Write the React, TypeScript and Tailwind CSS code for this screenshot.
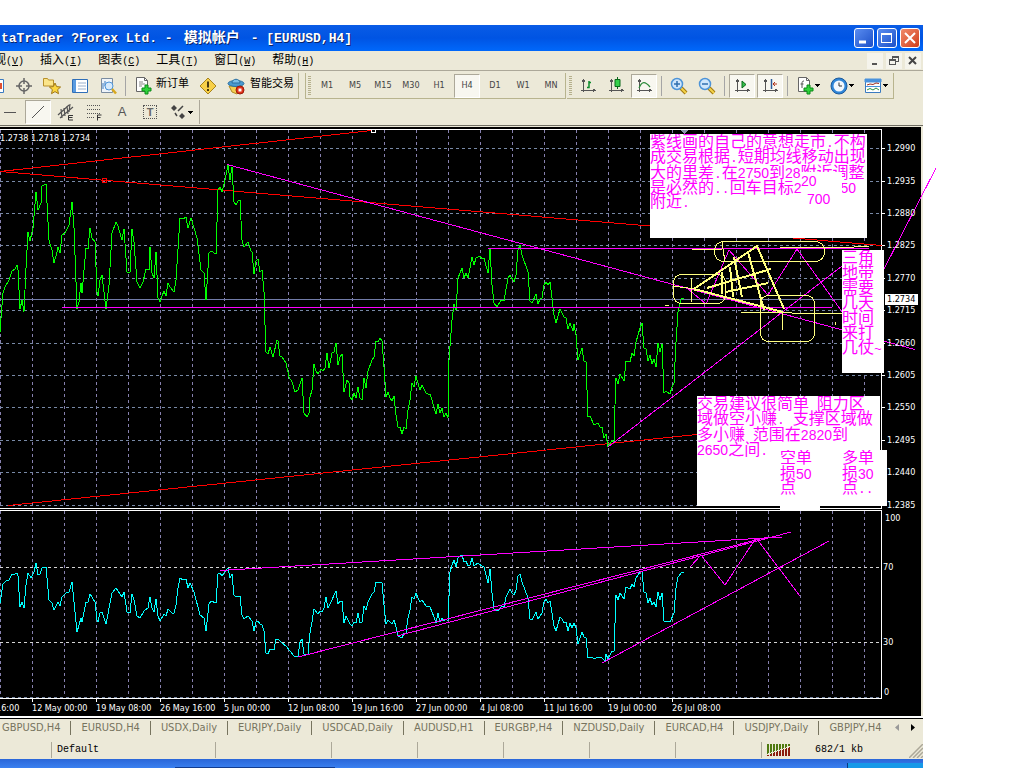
import type { ReactNode } from 'react';
import clsx from 'clsx';

const PRICE =
  '0,332 2,305 3,293 5,287 9,280 12,271 15,269 17,265 18,270 20,309 22,300 24,312 26,268 28,232 30,241 33,228 36,192 38,210 41,203 42,186 46,184 49,240 51,247 52,250 54,263 57,252 58,247 60,253 62,235 65,233 69,225 72,202 74,228 77,309 79,302 81,283 82,293 86,248 88,249 90,228 92,238 95,242 97,292 98,296 100,280 102,275 104,292 106,309 109,285 112,233 116,222 118,226 122,240 124,229 127,272 130,272 132,229 134,242 137,282 140,288 143,282 146,269 149,270 150,247 152,273 154,278 156,252 158,298 160,302 162,296 164,291 166,296 168,283 170,287 174,292 176,280 180,218 183,219 186,217 188,228 191,218 197,238 201,270 204,273 206,300 209,253 211,251 216,254 218,190 220,187 222,192 225,180 228,165 230,180 232,167 234,202 236,205 238,201 240,200 242,240 244,247 248,242 251,251 252,252 254,274 256,261 258,259 260,272 262,270 264,292 265,325 266,352 268,354 270,347 273,357 277,340 278,341 280,356 282,357 286,363 289,377 292,382 295,392 298,390 302,378 304,413 307,417 309,413 310,397 312,390 314,364 316,371 318,374 321,369 323,371 325,368 327,353 329,368 332,353 334,352 336,343 338,365 340,357 342,354 344,392 347,380 349,383 350,397 352,400 354,393 356,398 358,387 360,398 362,400 364,378 366,388 368,371 372,360 374,357 376,341 378,342 380,338 382,341 384,367 386,397 388,392 390,398 392,401 394,396 396,415 398,427 400,427 402,434 404,427 406,429 408,410 410,400 412,383 414,387 416,376 420,390 422,385 426,393 428,394 430,394 432,400 436,414 438,404 440,413 442,408 444,417 446,413 448,418 449,360 451,333 452,320 454,304 456,310 458,278 462,268 464,278 466,273 468,278 470,268 472,257 474,265 476,258 480,256 482,259 484,258 488,273 490,248 492,285 494,303 497,307 501,300 504,301 508,278 510,275 514,282 516,275 518,250 520,245 522,255 528,272 530,301 532,303 536,294 538,304 540,299 542,298 544,285 546,282 548,285 550,282 552,298 554,315 556,323 560,309 564,317 566,318 568,329 570,323 573,331 574,324 576,335 578,360 582,348 584,361 586,362 588,417 590,416 594,425 598,423 600,427 602,427 604,438 606,434 608,447 612,440 614,443 615,405 616,378 618,384 620,374 624,381 626,361 630,362 632,353 634,356 636,342 640,328 642,323 644,348 646,349 648,361 650,355 652,364 654,359 656,367 658,343 660,352 662,344 664,393 666,391 670,394 672,387 674,383 676,342 678,312 681,300 682,298 684,298';

const RSI =
  '0,603 3,584 6,581 9,580 12,574 15,574 17,573 18,576 20,607 22,602 24,608 26,585 28,573 31,578 34,572 36,563 38,575 40,574 42,568 46,567 49,600 52,603 54,610 58,602 60,606 62,597 66,593 69,592 72,582 74,602 77,632 81,618 82,622 86,602 88,602 90,594 95,602 97,620 98,622 100,613 102,612 106,624 112,593 116,588 122,597 124,592 127,612 130,613 132,594 134,600 137,616 140,618 144,611 148,608 150,597 152,608 154,612 156,599 158,616 160,621 164,614 166,616 168,609 172,613 174,613 176,605 178,588 180,578 183,580 186,579 188,588 190,583 194,592 200,615 204,618 206,631 209,604 211,601 216,603 218,574 220,573 222,576 228,568 230,578 232,574 234,595 236,597 238,596 240,596 242,615 244,619 248,616 252,621 254,631 256,622 258,621 260,624 262,625 264,631 266,653 268,654 270,649 274,650 276,639 278,639 282,643 286,646 290,651 294,656 298,656 300,642 302,639 304,654 308,654 310,633 312,622 314,609 318,614 320,611 322,612 324,608 326,597 328,608 330,604 336,591 338,604 340,601 342,601 344,623 346,616 350,624 352,626 354,622 356,623 358,613 360,623 362,622 364,606 366,610 368,602 372,594 374,592 376,582 380,582 382,583 384,605 386,624 388,620 392,624 394,620 396,627 398,636 402,638 404,633 406,633 408,618 410,610 412,597 414,599 416,593 418,598 420,602 422,600 426,606 430,607 434,617 436,623 438,613 440,622 442,618 444,621 446,619 448,621 450,572 452,565 454,560 456,567 458,558 462,555 464,562 466,561 468,566 470,565 472,558 474,566 478,563 482,566 484,567 488,583 490,569 492,593 494,609 498,611 502,606 504,607 506,597 510,589 512,593 514,595 516,590 518,576 520,574 522,582 528,598 530,619 532,620 536,612 538,619 542,613 544,602 546,599 548,603 550,601 552,613 554,626 556,631 560,617 562,619 564,623 566,622 568,631 570,623 572,628 574,623 576,628 578,644 582,632 584,637 586,638 588,658 592,657 594,659 598,657 602,658 605,661 606,654 608,659 612,651 614,652 616,595 618,600 620,593 624,599 626,587 630,589 632,584 634,587 636,578 640,572 642,571 644,592 646,593 648,603 650,598 652,605 654,602 656,607 658,592 660,600 662,593 664,621 668,621 670,622 674,613 676,588 678,577 682,572 684,572';

const GRID_X = Array.from({ length: 28 }, (_, i) => i * 32);

const LEVELS = [
  { y: 148, label: '1.2990' },
  { y: 181, label: '1.2935' },
  { y: 213, label: '1.2880' },
  { y: 245, label: '1.2825' },
  { y: 278, label: '1.2770' },
  { y: 310, label: '1.2715' },
  { y: 343, label: '1.2660' },
  { y: 375, label: '1.2605' },
  { y: 407, label: '1.2550' },
  { y: 440, label: '1.2495' },
  { y: 472, label: '1.2440' },
  { y: 505, label: '1.2385' },
];

const RSI_LEVELS = [
  { x: 885, y: 518, label: '100' },
  { x: 883, y: 567, label: '70' },
  { x: 883, y: 642, label: '30' },
  { x: 884, y: 692, label: '0' },
];

const TIMES = [
  '16:00',
  '12 May 00:00',
  '19 May 08:00',
  '26 May 16:00',
  '5 Jun 00:00',
  '12 Jun 08:00',
  '19 Jun 16:00',
  '27 Jun 00:00',
  '4 Jul 08:00',
  '11 Jul 16:00',
  '19 Jul 00:00',
  '26 Jul 08:00',
];

const MENU = [
  ['视', 'V'],
  ['插入', 'I'],
  ['图表', 'C'],
  ['工具', 'T'],
  ['窗口', 'W'],
  ['帮助', 'H'],
];

const PERIODS = ['M1', 'M5', 'M15', 'M30', 'H1', 'H4', 'D1', 'W1', 'MN'];

const TABS = [
  'GBPUSD,H4',
  'EURUSD,H4',
  'USDX,Daily',
  'EURJPY,Daily',
  'USDCAD,Daily',
  'AUDUSD,H1',
  'EURGBP,H4',
  'NZDUSD,Daily',
  'EURCAD,H4',
  'USDJPY,Daily',
  'GBPJPY,H4',
];

const TAHOMA = "font-['DejaVu_Sans_Condensed','DejaVu_Sans',sans-serif]";
const SONG = "font-['Liberation_Mono','Noto_Sans_CJK_SC',monospace]";

// Digits and punctuation take half of a full-width cell.
function Mixed({ text }: { text: string }) {
  return (
    <>
      {text.split(/([0-9]+|[ .~]+)/).map((part, i) => {
        if (i % 2 === 0) return part;
        return (
          <span key={i} className={/\d/.test(part) ? "font-['Liberation_Sans',sans-serif] text-[14px]" : 'text-[13px]'}>
            {part}
          </span>
        );
      })}
    </>
  );
}

function Icon({ children, size = 18 }: { children: ReactNode; size?: number }) {
  return (
    <svg width={size} height={size} viewBox="0 0 18 18" fill="none" className="shrink-0">
      {children}
    </svg>
  );
}

function ToolButton({
  label,
  pressed,
  wide,
  children,
}: {
  label: string;
  pressed?: boolean;
  wide?: boolean;
  children: ReactNode;
}) {
  return (
    <button
      aria-label={label}
      aria-pressed={pressed}
      className={clsx('flex h-6 shrink-0 items-center justify-center', wide ? 'w-[34px]' : 'w-7')}
    >
      <span
        className={clsx(
          'flex h-6 items-center justify-center',
          pressed && 'w-[26px] border border-[#aca899] border-r-white border-b-white bg-[#f8f7f0]',
        )}
      >
        {children}
      </span>
    </button>
  );
}

function Separator() {
  return <div className="mx-[3px] h-5 w-px shrink-0 bg-[#a5a5a5]" />;
}

function Grip() {
  return <div className="mx-[2px] h-5 w-[3px] shrink-0 bg-[repeating-linear-gradient(#b5b08c_0_1px,#ece9d8_1px_2px)]" />;
}

function Caret() {
  return (
    <svg width="5" height="3" viewBox="0 0 5 3" className="ml-px shrink-0" shapeRendering="crispEdges">
      <path d="M0 0h5L2.5 3z" fill="#000" />
    </svg>
  );
}

function Axes() {
  return (
    <path
      d="M4.500 2v13M2 13.500h14M3 4.500l1.500-2 1.500 2M14 12l2 1.500-2 1.500"
      stroke="#555"
      shapeRendering="crispEdges"
    />
  );
}

function Page() {
  return (
    <>
      <path d="M2.500.5h8l3 3v11h-11z" fill="#fff" stroke="#666" />
      <path d="M10.500.5v3h3" stroke="#666" />
    </>
  );
}

function Plus() {
  return <path d="M11 8h3v3h3v3h-3v3h-3v-3H8v-3h3z" fill="#2fd23a" stroke="#0a8a18" />;
}

function Magnifier({ plus }: { plus?: boolean }) {
  return (
    <Icon>
      <path d="M11 11l5 5" stroke="#a37a10" strokeWidth="4" />
      <path d="M11 11l5 5" stroke="#f4d24a" strokeWidth="2" />
      <circle cx="7" cy="7" r="5.500" fill="#cfe6fb" stroke="#4d94d8" strokeWidth="1.500" />
      <path d={plus ? 'M4 7h6M7 4v6' : 'M4 7h6'} stroke="#2f6fb0" strokeWidth="1.500" />
    </Icon>
  );
}

function TitleBar() {
  return (
    <header className="flex h-[26px] items-center justify-between bg-linear-to-b from-[#0a5ce6] via-[#0054e3] to-[#0068fb] pr-[3px]">
      <h1
        className={clsx(
          SONG,
          'overflow-hidden pl-px text-[13px] font-bold whitespace-nowrap text-white [text-shadow:1px_1px_0_#0a246a]',
        )}
      >
        taTrader ?Forex Ltd. -<span className="mx-[11px] text-[14px]">模拟帐户</span>- [EURUSD,H4]
      </h1>
      <div className="flex shrink-0 gap-[3px]">
        <button aria-label="Minimize" className="size-5 rounded-[3px] border border-white bg-linear-to-br from-[#5a8cf0] to-[#1c4fc8]">
          <svg viewBox="0 0 18 18"><path d="M4 13h7" stroke="#fff" strokeWidth="3" /></svg>
        </button>
        <button aria-label="Maximize" className="size-5 rounded-[3px] border border-white bg-linear-to-br from-[#5a8cf0] to-[#1c4fc8]">
          <svg viewBox="0 0 18 18" fill="none" shapeRendering="crispEdges"><path d="M3.500 4.500h10v9h-10zM3 5.500h11" stroke="#fff" /><path d="M3 4h11v2H3z" fill="#fff" /></svg>
        </button>
        <button aria-label="Close" className="size-5 rounded-[3px] border border-white bg-linear-to-br from-[#f08a6a] to-[#d03a14]">
          <svg viewBox="0 0 18 18"><path d="M4 4l10 10M14 4L4 14" stroke="#fff" strokeWidth="2" /></svg>
        </button>
      </div>
    </header>
  );
}

function MenuBar() {
  return (
    <nav className="flex h-5 items-center justify-between border-b border-[#aca899] pr-[2px]">
      <div className={clsx(SONG, '-ml-[6px] flex gap-4 text-[12px] whitespace-nowrap')}>
        {MENU.map(([name, key]) => (
          <button key={key} className="flex items-baseline">
            {name}
            <span className="text-[10px]">
              (<u>{key}</u>)
            </span>
          </button>
        ))}
      </div>
      <div className="flex gap-[3px]">
        <button aria-label="Minimize chart" className="size-4 bg-[#f5f4ec]">
          <svg viewBox="0 0 16 16"><path d="M5 11h5" stroke="#555" strokeWidth="2" /></svg>
        </button>
        <button aria-label="Restore chart" className="size-4 bg-[#f5f4ec]">
          <svg viewBox="0 0 16 16" fill="none" shapeRendering="crispEdges"><path d="M3.500 7.500h6v4h-6zM3 6.500h7M6.500 6V4.500h6v4H10M6 3.500h7" stroke="#555" /></svg>
        </button>
        <button aria-label="Close chart" className="size-4 bg-[#f5f4ec]">
          <svg viewBox="0 0 16 16"><path d="M4 4l7 7M11 4l-7 7" stroke="#444" strokeWidth="2" /></svg>
        </button>
      </div>
    </nav>
  );
}

function Toolbar() {
  return (
    <div className="flex h-7 gap-[6px] pt-[2px] whitespace-nowrap">
      <div className="-ml-[18px] flex shrink-0 items-center border-r border-b border-[#b8b48e] pr-[4px]">
        <ToolButton label="Market watch">
          <Icon>
            <path d="M1 2.500h15.500v13H1z" fill="#fff" stroke="#3a7ac0" />
            <path d="M14 6v6" stroke="#e05030" strokeWidth="2" />
          </Icon>
        </ToolButton>
        <ToolButton label="Data window">
          <Icon>
            <circle cx="9" cy="9" r="5" stroke="#666" strokeWidth="1.500" />
            <path d="M9 1v6M9 11v6M1 9h6M11 9h6" stroke="#666" strokeWidth="1.500" />
          </Icon>
        </ToolButton>
        <ToolButton label="Favorites">
          <Icon>
            <path d="M.5 1.500h4l1 1.500h5v6H.5z" fill="#fbe58a" stroke="#b8902a" />
            <path d="M12 6l1.600 3.600 4 .4-3 2.700.9 4-3.500-2.100-3.500 2.100.9-4-3-2.700 4-.4z" fill="#fbd640" stroke="#a07818" />
          </Icon>
        </ToolButton>
        <ToolButton label="Navigator">
          <Icon>
            <path d="M1.500 2.500h15v13h-15z" fill="#fff" stroke="#2f6fb8" />
            <path d="M2 3h3v12H2z" fill="#5a9be0" />
            <path d="M7 6h8M7 9h8M7 12h8" stroke="#9ab0cc" />
          </Icon>
        </ToolButton>
        <ToolButton label="Strategy tester">
          <Icon>
            <path d="M2.500 1.500h11v14h-11z" fill="#eef4fa" stroke="#7a8ca0" />
            <path d="M4 12V6M6 9V4M8 6v7" stroke="#3a7ac0" />
            <circle cx="10" cy="9" r="4" fill="#d6eafc" stroke="#4d94d8" />
            <path d="M13 12l4 4.500" stroke="#d8a820" strokeWidth="2.500" />
          </Icon>
        </ToolButton>
        <Separator />
        <button className={clsx(SONG, 'flex h-6 shrink-0 items-center px-[5px] text-[11px]')}>
          <Icon><Page /><path d="M5 5h4M5 7h6M5 9h3" stroke="#888" /><Plus /></Icon>
          <span className="pb-[2px] pl-1">新订单</span>
        </button>
        <ToolButton label="Alerts">
          <Icon>
            <path d="M9 1l8 8-8 8-8-8z" fill="#f8d048" stroke="#a8841c" />
            <path d="M9 4.500v6M9 12v2" stroke="#4a3a10" strokeWidth="2" />
          </Icon>
        </ToolButton>
        <button className={clsx(SONG, 'flex h-6 shrink-0 items-center pl-[5px] text-[11px]')}>
          <Icon>
            <path d="M2 9l3 6 5 2 5-8z" fill="#f4cf52" stroke="#b08820" />
            <ellipse cx="9" cy="6.500" rx="8" ry="3" fill="#4a9ad0" stroke="#2a6fa0" />
            <path d="M5 6c0-5 8-5 8 0z" fill="#7cc0ea" stroke="#2a6fa0" />
            <circle cx="13" cy="13" r="4" fill="#e03018" stroke="#9a1c0c" />
            <path d="M11.500 11.500h3v3h-3z" fill="#fff" />
          </Icon>
          <span className="pb-[2px] pl-[5px]">智能交易</span>
        </button>
      </div>

      <div className="flex shrink-0 items-center border-r border-b border-l border-[#b8b48e]">
        <Grip />
        {PERIODS.map((p) => (
          <ToolButton key={p} label={p} pressed={p === 'H4'}>
            <span className={clsx(TAHOMA, 'text-[9px] text-[#444]')}>{p}</span>
          </ToolButton>
        ))}
      </div>

      <div className="-ml-[5px] flex shrink-0 items-center border-r border-b border-[#b8b48e]">
        <Grip />
        <ToolButton label="Bar chart">
          <Icon><Axes /><path d="M8 10.500h2V4M10 5.500h2" stroke="#0a8a2a" strokeWidth="1.500" /></Icon>
        </ToolButton>
        <ToolButton label="Candlesticks">
          <Icon><Axes /><path d="M10.500 0v12" stroke="#0a6a1a" /><path d="M8 2.500h5v7H8z" fill="#35d04a" stroke="#0a6a1a" /></Icon>
        </ToolButton>
        <ToolButton label="Line chart" pressed>
          <Icon><Axes /><path d="M4 11c3-7 6-7 11-1" stroke="#2a8a3a" strokeWidth="1.200" /></Icon>
        </ToolButton>
        <Separator />
        <ToolButton label="Zoom in"><Magnifier plus /></ToolButton>
        <ToolButton label="Zoom out"><Magnifier /></ToolButton>
        <Separator />
        <ToolButton label="Auto scroll" pressed>
          <Icon><Axes /><path d="M9 4l4 3.500L9 11z" fill="#35c04a" stroke="#0a6a1a" /></Icon>
        </ToolButton>
        <ToolButton label="Chart shift" pressed>
          <Icon><Axes /><path d="M10.500 2v10" stroke="#2a5a9a" strokeWidth="1.500" /><path d="M16 7h-4M14 5l-2 2 2 2" stroke="#b03018" /></Icon>
        </ToolButton>
        <Separator />
        <ToolButton label="Indicators" wide>
          <Icon><Page /><path d="M8 4c-2 0-2 1-2 3v4M4.500 7h3" stroke="#555" /><Plus /></Icon>
          <Caret />
        </ToolButton>
        <ToolButton label="Periods" wide>
          <Icon>
            <circle cx="9" cy="9" r="8" fill="#2f86d8" stroke="#1c5a9c" />
            <circle cx="9" cy="9" r="5.500" fill="#f2f8fe" />
            <path d="M9 5.500V9h3" stroke="#333" />
          </Icon>
          <Caret />
        </ToolButton>
        <ToolButton label="Templates" wide>
          <Icon>
            <path d="M1.500 2.500h15v13h-15z" fill="#fff" stroke="#3a7ac0" />
            <path d="M1 2h16v3H1zM2 9.500h14" fill="#4a92dc" stroke="#4a92dc" />
            <path d="M3 8l3-1 3 .5 3-1.500 3 .5" stroke="#a03020" />
            <path d="M3 13l3-1.500 3 1.500 3-2 3 2" stroke="#2a9040" />
          </Icon>
          <Caret />
        </ToolButton>
      </div>
    </div>
  );
}

function DrawingBar() {
  return (
    <div className="flex h-[26px] items-center">
      <div className="-ml-[18px] flex items-center border-r border-[#aca899] pr-px pl-[14px]">
        <ToolButton label="Horizontal line">
          <Icon><path d="M3 9.500h12" stroke="#555" /></Icon>
        </ToolButton>
        <ToolButton label="Trend line" pressed>
          <Icon><path d="M3 15L15 3" stroke="#555" /></Icon>
        </ToolButton>
        <ToolButton label="Equidistant channel">
          <Icon>
            <path d="M1 12L12 2M3 15L16 4M4 6l1 9M7 5l1 8M10 3l1 8M13 1l-1 8" stroke="#555" strokeWidth="1.200" />
            <path d="M16 12.500h-4.500v4.500h4.500M11.500 14.500h4" stroke="#333" />
          </Icon>
        </ToolButton>
        <ToolButton label="Fibonacci retracement">
          <Icon>
            <path d="M2 2.500h14M2 6.500h14M2 10.500h14M2 14.500h8" stroke="#555" strokeDasharray="1 1" shapeRendering="crispEdges" />
            <path d="M12.500 17.500v-5.500h4M12.500 14.500h3" stroke="#333" />
          </Icon>
        </ToolButton>
        <ToolButton label="Text">
          <span className="font-['Liberation_Sans',sans-serif] text-[13px] text-[#555]">A</span>
        </ToolButton>
        <ToolButton label="Text label">
          <span className="flex size-[14px] items-center justify-center border border-dotted border-[#555] font-['Liberation_Sans',sans-serif] text-[11px] font-bold text-[#666]">
            T
          </span>
        </ToolButton>
        <ToolButton label="Arrows" wide>
          <Icon>
            <path d="M5 2l3 3-3 3-3-3zM13 10l3 3-3 3-3-3z" fill="#444" />
            <path d="M6 10l2 3M9 8l5-5" stroke="#444" strokeWidth="1.500" />
          </Icon>
          <Caret />
        </ToolButton>
      </div>
    </div>
  );
}

function Chart() {
  return (
    <svg
      width="923"
      height="589"
      viewBox="0 127 923 589"
      fill="none"
      shapeRendering="crispEdges"
      className="block overflow-visible"
    >
      <g stroke="#8680ae" strokeDasharray="3 3">
        {GRID_X.map((x) => (
          <path key={x} d={`M${x + 0.5} 130V508M${x + 0.5} 511V697`} />
        ))}
      </g>
      <g stroke="#7889a6" strokeDasharray="3 3">
        {LEVELS.map(({ y }) => (
          <path key={y} d={`M0 ${y + 0.5}H881`} />
        ))}
        <path d="M0 697.500H881" />
      </g>
      <path d="M0 567.500H881M0 642.500H881" stroke="#d4d4d4" strokeDasharray="3 3" />
      <path d="M0 299.500H881" stroke="#717ba8" />

      <path d="M0 129.500H881.500V508.500H0M0 510.500H881.500V698.500H0" stroke="#fff" />
      <g stroke="#fff">
        {LEVELS.map(({ y }) => (
          <path key={y} d={`M882 ${y + 0.5}h3`} />
        ))}
        {TIMES.slice(1).map((t, i) => (
          <path key={t} d={`M${i * 64 + 32.5} 699v3`} />
        ))}
      </g>
      <path d="M680 130h9l-4.500 4z" fill="#8a93ad" />

      <g stroke="#f00">
        <path d="M0 171.500L372 130.500M0 171.500L882 245.500M8 505.500L697 434.500" />
        <path d="M102.500 178.500h4v4h-4z" />
      </g>
      <path d="M371.500 129.500h4v3h-4z" fill="#000" stroke="#fff" />

      <polyline points={PRICE} stroke="#0f0" />
      <polyline points={RSI} stroke="#0ff" />

      <g stroke="#f0f">
        <path d="M227 164.500L915 349.500M488 248.500H869M62 307.500H832M608 447L842 266" />
        <path d="M687 288L706 304L729 250L768 295L797 249L848 320L884 269L936 168" />
        <path d="M220 570.500L782 537M298 657L768 537M397 636L791 532M602 663L829 541" />
        <path d="M690 567L701 555L725 585L756 538L800 596" />
      </g>

      <g stroke="#ffff80">
        <rect x="714.500" y="241.500" width="110" height="20" rx="9" />
        <rect x="673.500" y="274.500" width="52" height="29" rx="8" />
        <rect x="760.500" y="295.500" width="54" height="46" rx="8" />
        <path d="M692 249.500H722M780 247.500H839L869 246.500M741 312.500L842 313.500M782.500 312V330M691.500 278V302M673 286L695 289M722 242L725 262M665 305.500H669M835.500 322V325" />
        <path
          d="M694 289L757 246L784 309M694 289L783 312M748 252L764 310M734 257L742 297M730 267L733 297M722 272L722 294M707 288L771 269M726 292L768 283M694 290H700"
          strokeWidth="2"
        />
      </g>

      <rect x="885" y="294" width="33" height="11" fill="#fff" />
      <g className={clsx(TAHOMA, 'fill-white text-[9px]')}>
        <text x="0" y="141">1.2738 1.2718 1.2734</text>
        {LEVELS.map(({ y, label }) => (
          <text key={label} x="887" y={y + 3}>
            {label}
          </text>
        ))}
        {RSI_LEVELS.map(({ x, y, label }) => (
          <text key={label} x={x} y={y + 3}>
            {label}
          </text>
        ))}
        {TIMES.map((t, i) => (
          <text key={t} x={i === 0 ? -4 : i * 64 - 32} y="711">
            {t}
          </text>
        ))}
        <text x="887" y="302" className="fill-black">
          1.2734
        </text>
      </g>
    </svg>
  );
}

function Note({ className, lines }: { className: string; lines: string[] }) {
  return (
    <div
      className={clsx(
        SONG,
        'absolute overflow-hidden bg-white pt-[2px] text-[16px] leading-[15px] whitespace-pre text-[#f0f]',
        className,
      )}
    >
      {lines.map((line) => (
        <div key={line} className="h-[15px]">
          <Mixed text={line} />
        </div>
      ))}
    </div>
  );
}

function Notes() {
  return (
    <>
      <Note
        className="top-[7px] left-[650px] h-[104px] w-[217px]"
        lines={[
          '紫线画的自己的意想走市.不构',
          '成交易根据.短期均线移动出现',
          '大的里差.在2750到28附近调整',
          '是必然的..回车目标2     50',
          '附近.',
        ]}
      />
      <Note className="top-[45px] left-[801px] w-[41px]" lines={['20']} />
      <Note className="top-[63px] left-[807px] w-[35px]" lines={['700']} />
      <Note
        className="top-[123px] left-[842px] h-[123px] w-[42px]"
        lines={['三角', '地带', '需要', '几天', '时间', '来打', '几仗~']}
      />
      <Note
        className="top-[269px] left-[697px] h-[110px] w-[183px]"
        lines={['交易建议很简单 阻力区', '域做空小赚. 支撑区域做', '多小赚 范围在2820到', '2650之间.']}
      />
      <Note className="top-[323px] left-[780px] h-[61px] w-10" lines={['空单', '损50', '点']} />
      <Note className="top-[323px] left-[842px] h-[56px] w-[45px]" lines={['多单', '损30', '点..']} />
    </>
  );
}

function ChartTabs() {
  return (
    <div className={clsx(TAHOMA, 'flex h-[22px] items-center border-t border-black pb-1 text-[11px] text-[#77745f]')}>
      <div className="-ml-2 flex min-w-0 flex-1 overflow-hidden whitespace-nowrap">
        {TABS.map((tab, i) => (
          <button key={tab} className={clsx('shrink-0 px-[10px] leading-[14px]', i > 0 && 'border-l border-[#77745f]')}>
            {tab}
          </button>
        ))}
      </div>
      <div className="flex shrink-0 gap-3 pr-2">
        <button aria-label="Previous tabs">
          <svg width="4" height="7" viewBox="0 0 4 7"><path d="M4 0v7L0 3.500z" fill="#999" /></svg>
        </button>
        <button aria-label="Next tabs">
          <svg width="4" height="7" viewBox="0 0 4 7"><path d="M0 0v7l4-3.500z" fill="#000" /></svg>
        </button>
      </div>
    </div>
  );
}

function StatusBar() {
  return (
    <footer className={clsx(SONG, 'flex h-[19px] items-center text-[10px] *:h-4 *:shrink-0')}>
      <div className="w-[51px]" />
      <div className="w-[164px] border-l border-[#aca899] pl-[5px] leading-4">Default</div>
      <div className="w-[116px] border-l border-[#aca899]" />
      {[0, 1, 2, 3, 4].map((i) => (
        <div key={i} className="w-[86px] border-l border-[#aca899]" />
      ))}
      <div className="flex w-[138px] items-center gap-[25px] border-l border-[#aca899] pl-[5px] leading-4">
        <svg width="23" height="12" viewBox="0 0 23 12" shapeRendering="crispEdges">
          <path d="M1 0v12M4 0v12M7 0v12M10 0v12M13 0v12M16 0v12M19 0v12M22 0v12" stroke="#4f7a10" strokeWidth="2" />
          <path d="M1 11v1M4 10v2M7 8v4M10 7v5M13 6v6M16 5v7M19 4v8M22 3v9" stroke="#8c1c0c" strokeWidth="2" />
          <path d="M0 10.500L23 2.500" stroke="#ece9d8" />
        </svg>
        <span>682/1 kb</span>
      </div>
      <div className="flex flex-1 items-end justify-end">
        <svg width="14" height="14" viewBox="0 0 14 14">
          <path d="M0 14L14 0M4 14L14 4M8 14l6-6M12 14l2-2" stroke="#aca899" strokeWidth="1.500" />
        </svg>
      </div>
    </footer>
  );
}

export default function App() {
  return (
    <div className="overflow-hidden bg-white pt-[25px]">
      <main className="mr-[101px] bg-[#ece9d8] text-black">
        <TitleBar />
        <MenuBar />
        <Toolbar />
        <DrawingBar />
        <div className="h-px bg-[#716f64]" />
        <section className="relative mt-px mr-[2px] bg-black">
          <Chart />
          <Notes />
        </section>
        <div className="h-[2px] bg-white" />
        <ChartTabs />
        <StatusBar />
        <div className="flex h-[9px] items-end justify-between bg-linear-to-b from-[#2a66d8] to-[#3a80f0]">
          <div className="ml-[175px] h-px w-40 bg-[#123c90]" />
          <div className="h-[5px] w-[76px] border-l border-[#0a3a80] bg-[#1799e8]" />
        </div>
      </main>
    </div>
  );
}
